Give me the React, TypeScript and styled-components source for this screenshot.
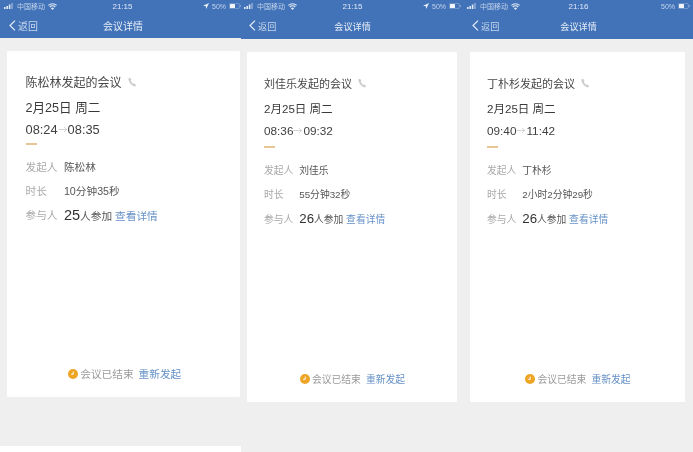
import React from 'react';
import styled, { createGlobalStyle } from 'styled-components';

const GlobalStyle = createGlobalStyle`
  html, body {
    margin: 0;
    padding: 0;
    background: #efefef;
  }
  body {
    font-family: "Liberation Sans", "Noto Sans CJK SC", sans-serif;
  }
`;

const Page = styled.div`
  display: flex;
  width: 693px;
  height: 452px;
  overflow: hidden;
  filter: blur(0.3px);
`;

const Panel = styled.section<{ $width: number; $size: number }>`
  width: ${(p) => p.$width}px;
  height: 452px;
  flex: none;
  font-size: ${(p) => p.$size}px;
  overflow: hidden;
  background: #efefef;
`;

const Header = styled.header<{ $height: number }>`
  height: ${(p) => p.$height}px;
  background: #4273b9;
  color: #dfe8f5;
`;

const StatusBar = styled.div<{ $left: number; $right: number }>`
  display: grid;
  grid-template-columns: 1fr auto 1fr;
  align-items: center;
  height: 12px;
  padding: 0 ${(p) => p.$right}px 0 ${(p) => p.$left}px;
  font-size: 7px;
  color: #c3d3ea;
`;

const StatusGroup = styled.div<{ $end?: boolean }>`
  display: flex;
  align-items: center;
  justify-content: ${(p) => (p.$end ? 'flex-end' : 'flex-start')};
  gap: 3px;
`;

const Clock = styled.span`
  color: #dfe8f5;
  font-size: 8px;
`;

const NavBar = styled.div<{ $left: number; $right: number }>`
  display: grid;
  grid-template-columns: 1fr auto 1fr;
  align-items: center;
  height: 27px;
  padding: 0 ${(p) => p.$right}px 2px ${(p) => p.$left}px;
`;

const BackLink = styled.div`
  display: flex;
  align-items: center;
  gap: 2px;
  font-size: 0.83em;
  color: #c8d7ec;
`;

const NavTitle = styled.div`
  font-size: 0.83em;
  color: #e6edf7;
`;

const Card = styled.article<{ $left: number; $right: number; $top: number; $height: number; $pad: number }>`
  display: flex;
  flex-direction: column;
  box-sizing: border-box;
  height: ${(p) => p.$height}px;
  margin: ${(p) => p.$top}px ${(p) => p.$right}px 0 ${(p) => p.$left}px;
  padding: 23px 16px 16px ${(p) => p.$pad}px;
  background: #fff;
  border-radius: 1px;
`;

const TitleRow = styled.div`
  display: flex;
  align-items: center;
  gap: 5px;
  height: 15px;
  color: #474747;
`;

const DateLine = styled.div`
  margin-top: 12px;
  height: 15px;
  line-height: 15px;
  font-size: 1.05em;
  color: #3a3a3a;
`;

const TimeLine = styled.div`
  display: flex;
  align-items: center;
  margin-top: 5px;
  height: 16px;
  font-size: 1.07em;
  color: #404040;
`;

const Dash = styled.div<{ $offset: number }>`
  width: 11px;
  height: 1.5px;
  margin-top: ${(p) => p.$offset}px;
  background: #e8c594;
`;

const InfoList = styled.dl<{ $gap: number }>`
  display: grid;
  grid-template-columns: 3.6em 1fr;
  grid-auto-rows: 16px;
  row-gap: ${(p) => p.$gap}px;
  align-items: center;
  margin: 14px 0 0;
  font-size: 0.89em;
`;

const InfoLabel = styled.dt`
  color: #a9a9a9;
`;

const InfoValue = styled.dd`
  margin: 0;
  color: #555;
  white-space: nowrap;
`;

const Count = styled.strong`
  font-size: 1.36em;
  font-weight: 400;
  color: #333;
`;

const BlueLink = styled.a`
  color: #6490c6;
`;

const Footer = styled.div`
  display: flex;
  align-items: center;
  justify-content: center;
  gap: 2px;
  margin-top: auto;
  font-size: 0.89em;
  color: #9a9a9a;
`;

const FooterLink = styled(BlueLink)`
  margin-left: 3px;
`;

const NextCard = styled.div`
  height: 10px;
  margin-top: 49px;
  background: #fff;
`;

const Signal = () => (
  <svg width="10" height="6" viewBox="0 0 10 6">
    <rect x="0" y="4" width="1.6" height="2" fill="#dfe8f5" />
    <rect x="2.4" y="3" width="1.6" height="3" fill="#dfe8f5" />
    <rect x="4.8" y="1.5" width="1.6" height="4.5" fill="#dfe8f5" />
    <rect x="7.2" y="0" width="1.6" height="6" fill="#8fabd4" />
  </svg>
);

const Wifi = () => (
  <svg width="9" height="7" viewBox="0 0 18 14" fill="#dfe8f5">
    <path d="M9 14 5.8 10.4a4.6 4.6 0 0 1 6.4 0z" />
    <path d="M4.4 8.8 2.7 7a9 9 0 0 1 12.6 0l-1.7 1.8a6.6 6.6 0 0 0-9.2 0z" />
    <path d="M1.5 5.7 0 4a13 13 0 0 1 18 0l-1.5 1.7a10.8 10.8 0 0 0-15 0z" />
  </svg>
);

const LocationArrow = () => (
  <svg width="6" height="6" viewBox="0 0 10 10" fill="#e6edf7">
    <path d="M10 0 0 4.6l4.6.7.8 4.7z" />
  </svg>
);

const Battery = () => (
  <svg width="12" height="6" viewBox="0 0 24 12">
    <rect x="0.7" y="0.7" width="20" height="10.6" rx="2.5" fill="none" stroke="#a9c0e0" strokeWidth="1" />
    <rect x="2" y="2" width="10" height="8" rx="1" fill="#f2f6fb" />
    <path d="M22.5 4v4c1-.3 1.5-1 1.5-2s-.5-1.700-1.500-2z" fill="#a9c0e0" />
  </svg>
);

const BackChevron = () => (
  <svg width="7" height="11" viewBox="0 0 7 11" fill="none" stroke="#e6edf7" strokeWidth="1.2">
    <path d="M6 .6 1 5.500l5 4.900" />
  </svg>
);

const PhoneIcon = () => (
  <svg width="10" height="10" viewBox="0 0 24 24" fill="#cdcdcd">
    <path d="M6.600 1.500 3.500 3C2.500 9 9 21 19 23l3-3.500-4.500-4.500-2.500 1.500C12.500 15 9.500 10.500 9 7.500l2-1.500z" />
  </svg>
);

const ArrowIcon = () => (
  <svg width="10" height="7" viewBox="0 0 10 7" fill="none" stroke="#c8c8c8" strokeWidth="0.8">
    <path d="M.5 3.500h8M6 1l2.700 2.500L6 6" />
  </svg>
);

const EndedIcon = () => (
  <svg width="10" height="10" viewBox="0 0 10 10">
    <circle cx="5" cy="5" r="5" fill="#eea526" />
    <path d="M5.200 2.600v2.700H3.200" fill="none" stroke="#fff" strokeWidth="1" />
  </svg>
);

type Meeting = {
  id: string;
  width: number;
  size: number;
  headerHeight: number;
  statusLeft: number;
  statusRight: number;
  navLeft: number;
  navRight: number;
  cardLeft: number;
  cardRight: number;
  cardTop: number;
  cardHeight: number;
  cardPad: number;
  dashOffset: number;
  rowGap: number;
  clock: string;
  hasArrow: boolean;
  host: string;
  start: string;
  end: string;
  duration: string;
  people: number;
  next?: boolean;
};

const meetings: Meeting[] = [
  {
    id: 'a', width: 241, size: 12, headerHeight: 38, statusLeft: 4, statusRight: 0, navLeft: 9, navRight: 4,
    cardLeft: 7, cardRight: 1, cardTop: 13, cardHeight: 346, cardPad: 18.5, dashOffset: 6, rowGap: 8,
    clock: '21:15', hasArrow: true, host: '陈松林', start: '08:24', end: '08:35',
    duration: '10分钟35秒', people: 25, next: true,
  },
  {
    id: 'b', width: 223, size: 11, headerHeight: 39, statusLeft: 3, statusRight: 3, navLeft: 8, navRight: 8,
    cardLeft: 6, cardRight: 7, cardTop: 13, cardHeight: 350, cardPad: 17, dashOffset: 8, rowGap: 8.5,
    clock: '21:15', hasArrow: true, host: '刘佳乐', start: '08:36', end: '09:32',
    duration: '55分钟32秒', people: 26,
  },
  {
    id: 'c', width: 229, size: 11, headerHeight: 39, statusLeft: 3, statusRight: 3, navLeft: 8, navRight: 8,
    cardLeft: 6, cardRight: 8, cardTop: 13, cardHeight: 350, cardPad: 17, dashOffset: 8, rowGap: 8.5,
    clock: '21:16', hasArrow: false, host: '丁朴杉', start: '09:40', end: '11:42',
    duration: '2小时2分钟29秒', people: 26,
  },
];

const MeetingPanel = ({ m }: { m: Meeting }) => (
  <Panel $width={m.width} $size={m.size}>
    <Header $height={m.headerHeight}>
      <StatusBar $left={m.statusLeft} $right={m.statusRight}>
        <StatusGroup>
          <Signal />
          <span>中国移动</span>
          <Wifi />
        </StatusGroup>
        <Clock>{m.clock}</Clock>
        <StatusGroup $end>
          {m.hasArrow && <LocationArrow />}
          <span>50%</span>
          <Battery />
        </StatusGroup>
      </StatusBar>
      <NavBar $left={m.navLeft} $right={m.navRight}>
        <BackLink>
          <BackChevron />
          返回
        </BackLink>
        <NavTitle>会议详情</NavTitle>
        <span />
      </NavBar>
    </Header>
    <Card
      $left={m.cardLeft}
      $right={m.cardRight}
      $top={m.cardTop}
      $height={m.cardHeight}
      $pad={m.cardPad}
    >
      <TitleRow>
        {m.host}发起的会议
        <PhoneIcon />
      </TitleRow>
      <DateLine>2月25日 周二</DateLine>
      <TimeLine>
        {m.start}
        <ArrowIcon />
        {m.end}
      </TimeLine>
      <Dash $offset={m.dashOffset} />
      <InfoList $gap={m.rowGap}>
        <InfoLabel>发起人</InfoLabel>
        <InfoValue>{m.host}</InfoValue>
        <InfoLabel>时长</InfoLabel>
        <InfoValue>{m.duration}</InfoValue>
        <InfoLabel>参与人</InfoLabel>
        <InfoValue>
          <Count>{m.people}</Count>人参加 <BlueLink>查看详情</BlueLink>
        </InfoValue>
      </InfoList>
      <Footer>
        <EndedIcon />
        会议已结束
        <FooterLink>重新发起</FooterLink>
      </Footer>
    </Card>
    {m.next && <NextCard />}
  </Panel>
);

const App = () => (
  <>
    <GlobalStyle />
    <Page>
      {meetings.map((m) => (
        <MeetingPanel key={m.id} m={m} />
      ))}
    </Page>
  </>
);

export default App;
